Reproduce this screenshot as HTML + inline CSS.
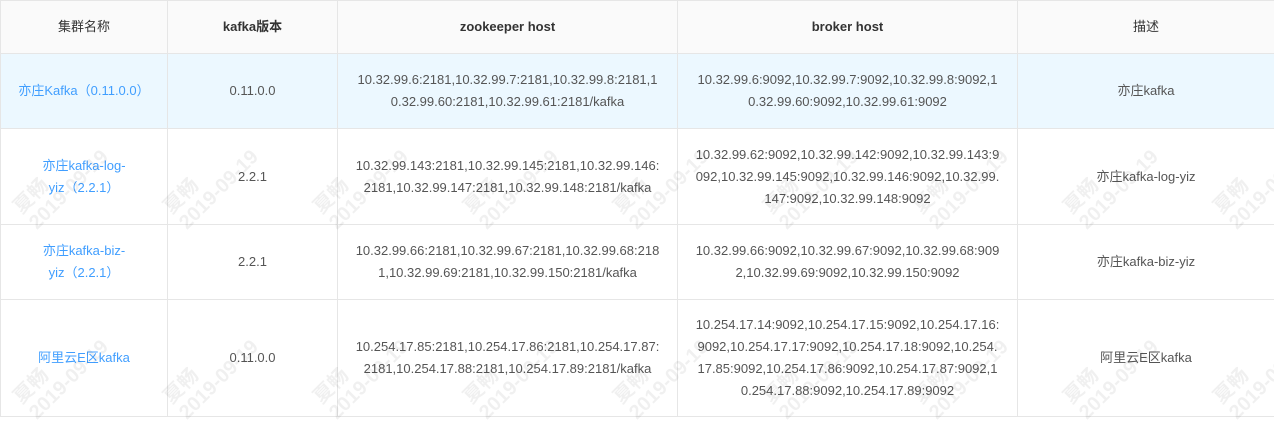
<!DOCTYPE html>
<html><head><meta charset="utf-8"><style>
body{margin:0;width:1274px;height:418px;overflow:hidden;background:#fff;font-family:"Liberation Sans","Noto Sans CJK SC",sans-serif;font-size:13px;color:#555;position:relative}
table{border-collapse:collapse;table-layout:fixed;width:1274px;position:absolute;left:0;top:0}
td,th{border:1px solid #e6e6e6;text-align:center;vertical-align:middle;line-height:22px;padding:0 16px;word-break:break-all}
th{background:#fafafa;color:#333;font-weight:bold;height:52px;font-size:13px}
th.r{font-weight:normal}
td.n{color:#409eff;padding:0 36px;word-break:normal}
tr.h td{background:#ecf8ff}
.wm{position:absolute;color:rgba(0,0,0,0.06);font-size:20px;font-weight:bold;transform:rotate(-45deg);white-space:nowrap;line-height:22px;pointer-events:none}
</style></head><body>
<table>
<colgroup><col style="width:167px"><col style="width:170px"><col style="width:340px"><col style="width:340px"><col style="width:257px"></colgroup>
<tr><th class="r">集群名称</th><th>kafka版本</th><th>zookeeper host</th><th>broker host</th><th class="r">描述</th></tr>
<tr class="h" style="height:75px"><td class="n" style="padding:0 6px">亦庄Kafka（0.11.0.0）</td><td>0.11.0.0</td><td>10.32.99.6:2181,10.32.99.7:2181,10.32.99.8:2181,10.32.99.60:2181,10.32.99.61:2181/kafka</td><td>10.32.99.6:9092,10.32.99.7:9092,10.32.99.8:9092,10.32.99.60:9092,10.32.99.61:9092</td><td>亦庄kafka</td></tr>
<tr style="height:96px"><td class="n">亦庄kafka-log-yiz（2.2.1）</td><td>2.2.1</td><td>10.32.99.143:2181,10.32.99.145:2181,10.32.99.146:2181,10.32.99.147:2181,10.32.99.148:2181/kafka</td><td>10.32.99.62:9092,10.32.99.142:9092,10.32.99.143:9092,10.32.99.145:9092,10.32.99.146:9092,10.32.99.147:9092,10.32.99.148:9092</td><td>亦庄kafka-log-yiz</td></tr>
<tr style="height:75px"><td class="n">亦庄kafka-biz-yiz（2.2.1）</td><td>2.2.1</td><td>10.32.99.66:2181,10.32.99.67:2181,10.32.99.68:2181,10.32.99.69:2181,10.32.99.150:2181/kafka</td><td>10.32.99.66:9092,10.32.99.67:9092,10.32.99.68:9092,10.32.99.69:9092,10.32.99.150:9092</td><td>亦庄kafka-biz-yiz</td></tr>
<tr style="height:117px"><td class="n" style="padding:0 6px">阿里云E区kafka</td><td>0.11.0.0</td><td>10.254.17.85:2181,10.254.17.86:2181,10.254.17.87:2181,10.254.17.88:2181,10.254.17.89:2181/kafka</td><td>10.254.17.14:9092,10.254.17.15:9092,10.254.17.16:9092,10.254.17.17:9092,10.254.17.18:9092,10.254.17.85:9092,10.254.17.86:9092,10.254.17.87:9092,10.254.17.88:9092,10.254.17.89:9092</td><td>阿里云E区kafka</td></tr>
</table>
<div class="wm" style="left:10px;top:160px">夏畅<br>2019-09-19</div>
<div class="wm" style="left:160px;top:160px">夏畅<br>2019-09-19</div>
<div class="wm" style="left:310px;top:160px">夏畅<br>2019-09-19</div>
<div class="wm" style="left:460px;top:160px">夏畅<br>2019-09-19</div>
<div class="wm" style="left:610px;top:160px">夏畅<br>2019-09-19</div>
<div class="wm" style="left:760px;top:160px">夏畅<br>2019-09-19</div>
<div class="wm" style="left:910px;top:160px">夏畅<br>2019-09-19</div>
<div class="wm" style="left:1060px;top:160px">夏畅<br>2019-09-19</div>
<div class="wm" style="left:1210px;top:160px">夏畅<br>2019-09-19</div>
<div class="wm" style="left:10px;top:350px">夏畅<br>2019-09-19</div>
<div class="wm" style="left:160px;top:350px">夏畅<br>2019-09-19</div>
<div class="wm" style="left:310px;top:350px">夏畅<br>2019-09-19</div>
<div class="wm" style="left:460px;top:350px">夏畅<br>2019-09-19</div>
<div class="wm" style="left:610px;top:350px">夏畅<br>2019-09-19</div>
<div class="wm" style="left:760px;top:350px">夏畅<br>2019-09-19</div>
<div class="wm" style="left:910px;top:350px">夏畅<br>2019-09-19</div>
<div class="wm" style="left:1060px;top:350px">夏畅<br>2019-09-19</div>
<div class="wm" style="left:1210px;top:350px">夏畅<br>2019-09-19</div>
</body></html>
